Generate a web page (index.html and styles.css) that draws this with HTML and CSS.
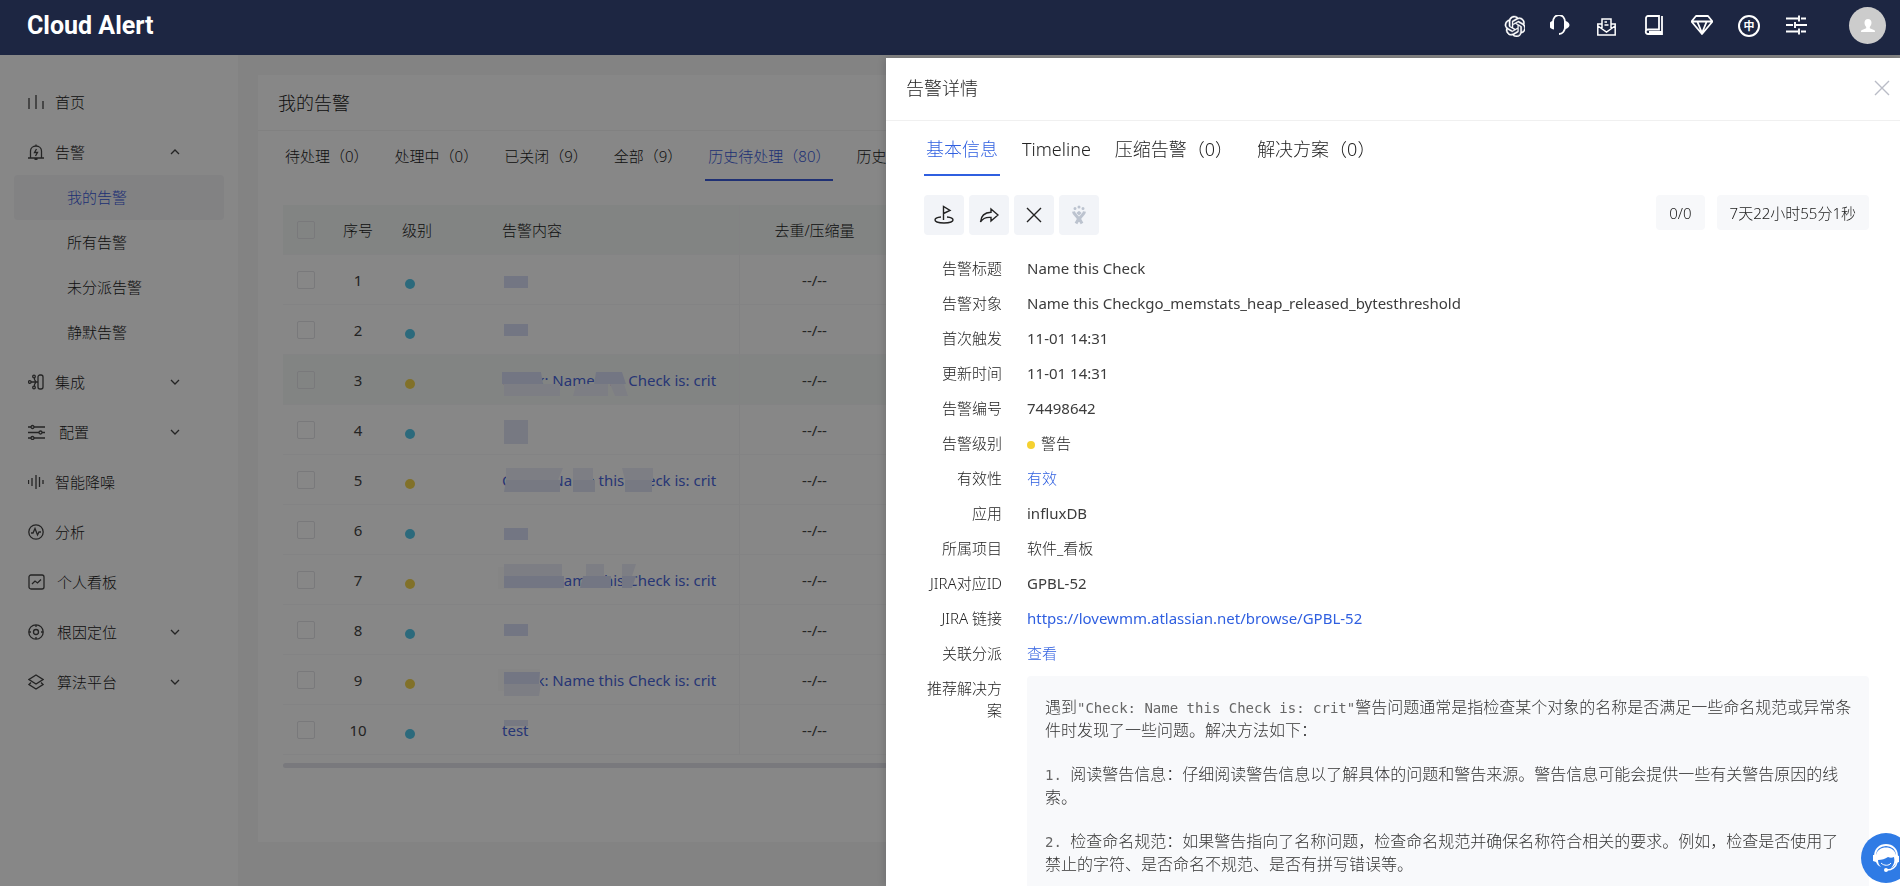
FILE: index.html
```html
<!DOCTYPE html>
<html lang="zh-CN">
<head>
    <meta charset="UTF-8">
    <meta name="viewport" content="width=device-width, initial-scale=1.0">
    <title>Cloud Alert</title>
    <link rel="stylesheet" href="styles.css">
</head>
<body>
    <header class="header">
        <div class="logo">Cloud Alert</div>
        <div class="header-tools">
            <button class="tool" aria-label="AI">
                <svg width="22" height="22" viewBox="-2 -1 25 25" fill="currentColor" stroke="currentColor" stroke-width=".4"><path d="M22.2819 9.8211a5.9847 5.9847 0 0 0-.5157-4.9108 6.0462 6.0462 0 0 0-6.5098-2.9A6.0651 6.0651 0 0 0 4.9807 4.1818a5.9847 5.9847 0 0 0-3.9977 2.9 6.0462 6.0462 0 0 0 .7427 7.0966 5.98 5.98 0 0 0 .511 4.9107 6.051 6.051 0 0 0 6.5146 2.9001A5.9847 5.9847 0 0 0 13.2599 24a6.0557 6.0557 0 0 0 5.7718-4.2058 5.9894 5.9894 0 0 0 3.9977-2.9001 6.0557 6.0557 0 0 0-.7475-7.0729zm-9.022 12.6081a4.4755 4.4755 0 0 1-2.8764-1.0408l.1419-.0804 4.7783-2.7582a.7948.7948 0 0 0 .3927-.6813v-6.7369l2.02 1.1686a.071.071 0 0 1 .038.052v5.5826a4.504 4.504 0 0 1-4.4945 4.4944zm-9.6607-4.1254a4.4708 4.4708 0 0 1-.5346-3.0137l.142.0852 4.783 2.7582a.7712.7712 0 0 0 .7806 0l5.8428-3.3685v2.3324a.0804.0804 0 0 1-.0332.0615L9.74 19.9502a4.4992 4.4992 0 0 1-6.1408-1.6464zM2.3408 7.8956a4.485 4.485 0 0 1 2.3655-1.9728V11.6a.7664.7664 0 0 0 .3879.6765l5.8144 3.3543-2.0201 1.1685a.0757.0757 0 0 1-.071 0l-4.8303-2.7865A4.504 4.504 0 0 1 2.3408 7.872zm16.5963 3.8558L13.1038 8.364 15.1192 7.2a.0757.0757 0 0 1 .071 0l4.8303 2.7913a4.4944 4.4944 0 0 1-.6765 8.1042v-5.6772a.79.79 0 0 0-.407-.667zm2.0107-3.0231l-.142-.0852-4.7735-2.7818a.7759.7759 0 0 0-.7854 0L9.409 9.2297V6.8974a.0662.0662 0 0 1 .0284-.0615l4.8303-2.7866a4.4992 4.4992 0 0 1 6.6802 4.66zM8.3065 12.863l-2.02-1.1638a.0804.0804 0 0 1-.038-.0567V6.0742a4.4992 4.4992 0 0 1 7.3757-3.4537l-.142.0805L8.704 5.459a.7948.7948 0 0 0-.3927.6813zm1.0976-2.3654l2.602-1.4998 2.6069 1.4998v2.9994l-2.5974 1.4997-2.6067-1.4997Z"/></svg>
            </button>
            <button class="tool" aria-label="客服">
                <svg width="22" height="22" viewBox="1 1 22 22"><path d="M4 8C4 4 6.500 1 10 1s6 3 6 7v5c0 4-2.500 7-6 7" fill="none" stroke="currentColor" stroke-width="1.800"/><path d="M5 6.500v9C2 15 0 13 0 11s2-4 5-4.500zM15 6.500v9c3-.5 5.500-2.500 5.500-4.500s-2.500-4-5.500-4.500z" fill="currentColor"/></svg>
            </button>
            <button class="tool" aria-label="消息">
                <svg width="22" height="22" viewBox="1 0 22 22" fill="none" stroke="currentColor" stroke-width="1.500"><path d="M5.500 9H1.800v11h17.400V9h-3.700M2 11l8.500 6 8.500-6M6 13V4h9v9M8.500 7h2.500M8.500 10h4"/></svg>
            </button>
            <button class="tool" aria-label="文档">
                <svg width="22" height="22" viewBox="0 1 22 22" fill="none" stroke="currentColor" stroke-width="1.800"><path d="M18 2v18H4c-3 0-3-4.500 0-4.500h11V2H4C3 2 2 3 2 4v13M5 18h13"/></svg>
            </button>
            <button class="tool" aria-label="会员">
                <svg width="22" height="22" viewBox="0 0 22 22" fill="none" stroke="currentColor" stroke-width="1.800" stroke-linejoin="round"><path d="M5 1h12l4.500 5.500L11 19 .5 6.500zM.5 6.500h21M6.500 7L11 18l4.500-11"/></svg>
            </button>
            <button class="tool lang" aria-label="语言">中</button>
            <button class="tool" aria-label="设置">
                <svg width="22" height="22" viewBox="0 1 22 22" fill="none" stroke="currentColor" stroke-width="1.900"><path d="M1 4.500h12M16 4.500h5M14 1.500v6M1 11h7M11 11h11M10 8v6M1 17.500h12M16 17.500h5M14 14.500v6"/></svg>
            </button>
            <button class="avatar" aria-label="用户">
                <svg width="14" height="14" viewBox="0 0 14 14" fill="#fff"><path d="M7 0c2.200 0 3.500 1.500 3.500 3.800C10.500 5.500 9.800 7 8.800 8v1.300L13 11c.8.4 1 1 1 2H0c0-1 .2-1.600 1-2l4.200-1.700V8c-1-1-1.700-2.500-1.700-4.200C3.500 1.500 4.800 0 7 0z"/></svg>
            </button>
        </div>
    </header>

    <div class="layout">
        <nav class="sidebar">
            <a class="menu-item" href="#">
                <svg width="16" height="16" viewBox="0 0 16 16"><path d="M1 4v11M8 1v14M15 7v8"/></svg>
                <span>首页</span>
            </a>
            <a class="menu-item" href="#">
                <svg width="16" height="16" viewBox="0 0 16 16"><path d="M0 14h16M2.500 14V7c0-3 2.500-5 5.500-5s5.500 2 5.500 5v7M8 .5V2M6.500 15.500h3M8.500 5L6.500 8.500h3L7.500 12"/></svg>
                <span>告警</span>
                <svg class="caret" width="10" height="6" viewBox="0 0 10 6"><path d="M1 5l4-4 4 4"/></svg>
            </a>
            <div class="submenu">
                <a class="active" href="#">我的告警</a>
                <a href="#">所有告警</a>
                <a href="#">未分派告警</a>
                <a href="#">静默告警</a>
            </div>
            <a class="menu-item" href="#">
                <svg width="16" height="16" viewBox="0 0 16 16"><rect x="10" y="1" width="5" height="14" rx="2"/><circle cx="1.800" cy="8" r="1.300"/><circle cx="6" cy="2.500" r="1.300"/><circle cx="6" cy="13.500" r="1.300"/><path d="M3 8h7M6.500 4v1.500L8 8M6.500 12v-1.500L8 8"/></svg>
                <span>集成</span>
                <svg class="caret" width="10" height="6" viewBox="0 0 10 6"><path d="M1 1l4 4 4-4"/></svg>
            </a>
            <a class="menu-item wide" href="#">
                <svg width="18" height="16" viewBox="0 0 18 16"><path d="M0 3h3M6 3h11M0 8.500h11M14 8.500h3M0 14h3M6 14h11"/><circle cx="4.500" cy="3" r="1.500"/><circle cx="12.500" cy="8.500" r="1.500"/><circle cx="4.500" cy="14" r="1.500"/></svg>
                <span>配置</span>
                <svg class="caret" width="10" height="6" viewBox="0 0 10 6"><path d="M1 1l4 4 4-4"/></svg>
            </a>
            <a class="menu-item" href="#">
                <svg width="16" height="16" viewBox="0 0 16 16"><path d="M.5 6v4M4 4v8M8 1v14M11.500 3v10M15 6v4"/></svg>
                <span>智能降噪</span>
            </a>
            <a class="menu-item" href="#">
                <svg width="16" height="16" viewBox="0 0 16 16"><circle cx="8" cy="8" r="7.200"/><path d="M3 9h2l2-4.500 2.500 6.500L11 8h2"/></svg>
                <span>分析</span>
            </a>
            <a class="menu-item" href="#">
                <svg width="18" height="16" viewBox="0 0 18 16"><rect x="1" y="1" width="15" height="14" rx="2"/><path d="M4 10l3-3 2.500 2L13 5.500"/></svg>
                <span>个人看板</span>
            </a>
            <a class="menu-item wide" href="#">
                <svg width="16" height="16" viewBox="0 0 16 16"><circle cx="8" cy="8" r="7.200"/><circle cx="8" cy="8" r="2.500"/><path d="M8 1v2M8 13v2M1 8h2M13 8h2"/></svg>
                <span>根因定位</span>
                <svg class="caret" width="10" height="6" viewBox="0 0 10 6"><path d="M1 1l4 4 4-4"/></svg>
            </a>
            <a class="menu-item wide" href="#">
                <svg width="16" height="16" viewBox="0 0 16 16"><path d="M8 1l7 4.500L8 10 1 5.500zM3 8.500l-2 2L8 15l7-4.500-2-2"/></svg>
                <span>算法平台</span>
                <svg class="caret" width="10" height="6" viewBox="0 0 10 6"><path d="M1 1l4 4 4-4"/></svg>
            </a>
        </nav>

        <main class="content">
            <section class="card">
                <h1 class="card-title">我的告警</h1>
                <div class="tabs">
                    <button>待处理（0）</button>
                    <button>处理中（0）</button>
                    <button>已关闭（9）</button>
                    <button>全部（9）</button>
                    <button class="active">历史待处理（80）</button>
                    <button>历史处理中</button>
                </div>
                <table class="alert-table">
                    <colgroup>
                        <col class="col-check">
                        <col class="col-no">
                        <col class="col-level">
                        <col class="col-text">
                        <col class="col-count">
                        <col>
                    </colgroup>
                    <thead>
                        <tr>
                            <th class="center"><input type="checkbox" aria-label="全选"></th>
                            <th class="center">序号</th>
                            <th>级别</th>
                            <th>告警内容</th>
                            <th class="center split">去重/压缩量</th>
                            <th></th>
                        </tr>
                    </thead>
                    <tbody>
                        <tr>
                            <td class="center"><input type="checkbox" aria-label="选择 1"></td>
                            <td class="center">1</td>
                            <td><i class="dot info"></i></td>
                            <td><svg class="mosaic" width="250" height="49"><rect class="m1" x="16" y="21" width="24" height="12"/></svg></td>
                            <td class="center split">--/--</td>
                            <td></td>
                        </tr>
                        <tr>
                            <td class="center"><input type="checkbox" aria-label="选择 2"></td>
                            <td class="center">2</td>
                            <td><i class="dot info"></i></td>
                            <td><svg class="mosaic" width="250" height="49"><rect class="m1" x="16" y="19" width="24" height="12"/></svg></td>
                            <td class="center split">--/--</td>
                            <td></td>
                        </tr>
                        <tr class="hover">
                            <td class="center"><input type="checkbox" aria-label="选择 3"></td>
                            <td class="center">3</td>
                            <td><i class="dot warn"></i></td>
                            <td><a href="#">Check: Name this Check is: crit</a><svg class="mosaic" width="250" height="49"><path class="m1" d="M14 17h39l2 12H14zM108 17h26l4 12h-32z"/><path class="m2" d="M16 29h56v12H16zM88 29h32v12H85zM122 29h14l4 12h-13z"/></svg></td>
                            <td class="center split">--/--</td>
                            <td></td>
                        </tr>
                        <tr>
                            <td class="center"><input type="checkbox" aria-label="选择 4"></td>
                            <td class="center">4</td>
                            <td><i class="dot info"></i></td>
                            <td><svg class="mosaic" width="250" height="49"><rect class="m3" x="16" y="15" width="24" height="24"/></svg></td>
                            <td class="center split">--/--</td>
                            <td></td>
                        </tr>
                        <tr>
                            <td class="center"><input type="checkbox" aria-label="选择 5"></td>
                            <td class="center">5</td>
                            <td><i class="dot warn"></i></td>
                            <td><a href="#">Check: Name this Check is: crit</a><svg class="mosaic" width="250" height="49"><path class="m2" d="M18 13h57l-5 12H18zM85 13h20v12H85zM134 13h31v12h-28z"/><path class="m3" d="M18 25h54v12H16zM85 25h22v12H85zM137 25h27v12h-27z"/></svg></td>
                            <td class="center split">--/--</td>
                            <td></td>
                        </tr>
                        <tr>
                            <td class="center"><input type="checkbox" aria-label="选择 6"></td>
                            <td class="center">6</td>
                            <td><i class="dot info"></i></td>
                            <td><svg class="mosaic" width="250" height="49"><rect class="m1" x="16" y="23" width="24" height="12"/></svg></td>
                            <td class="center split">--/--</td>
                            <td></td>
                        </tr>
                        <tr>
                            <td class="center"><input type="checkbox" aria-label="选择 7"></td>
                            <td class="center">7</td>
                            <td><i class="dot warn"></i></td>
                            <td><a href="#">Check: Name this Check is: crit</a><svg class="mosaic" width="250" height="49"><path class="m0" d="M10 12h64v22H10z"/><path class="m2" d="M16 9h58v12H16zM98 9h18v12H98zM134 9h14l-4 12h-10z"/><path class="m1" d="M16 21h60v12H16zM95 21h28v12H92zM134 21h14l-4 12h-10z"/></svg></td>
                            <td class="center split">--/--</td>
                            <td></td>
                        </tr>
                        <tr>
                            <td class="center"><input type="checkbox" aria-label="选择 8"></td>
                            <td class="center">8</td>
                            <td><i class="dot info"></i></td>
                            <td><svg class="mosaic" width="250" height="49"><rect class="m1" x="16" y="19" width="24" height="12"/></svg></td>
                            <td class="center split">--/--</td>
                            <td></td>
                        </tr>
                        <tr>
                            <td class="center"><input type="checkbox" aria-label="选择 9"></td>
                            <td class="center">9</td>
                            <td><i class="dot warn"></i></td>
                            <td><a href="#">Check: Name this Check is: crit</a><svg class="mosaic" width="250" height="49"><path class="m0" d="M10 14h42v22H10z"/><path class="m1" d="M16 17h36l-1 12H16z"/><path class="m2" d="M16 29h37l-2 12H16z"/></svg></td>
                            <td class="center split">--/--</td>
                            <td></td>
                        </tr>
                        <tr>
                            <td class="center"><input type="checkbox" aria-label="选择 10"></td>
                            <td class="center">10</td>
                            <td><i class="dot info"></i></td>
                            <td><a href="#">test</a><svg class="mosaic" width="250" height="49"><path class="m3" d="M16 15h24v6H16z"/></svg></td>
                            <td class="center split">--/--</td>
                            <td></td>
                        </tr>
                    </tbody>
                </table>
                <div class="scrollbar"></div>
            </section>
        </main>
    </div>

    <div class="mask"></div>

    <aside class="drawer">
        <div class="drawer-header">
            <h2>告警详情</h2>
            <button class="close" aria-label="关闭">
                <svg width="16" height="16" viewBox="0 0 16 16"><path d="M1 1l14 14M15 1L1 15" fill="none" stroke="#b9bcc6" stroke-width="1.400"/></svg>
            </button>
        </div>
        <div class="drawer-body">
            <div class="drawer-tabs">
                <button class="active">基本信息</button>
                <button>Timeline</button>
                <button>压缩告警（0）</button>
                <button>解决方案（0）</button>
            </div>
            <div class="toolbar">
                <button aria-label="认领">
                    <svg width="20" height="20" viewBox="0 0 20 20"><path d="M9.500 15V1.500L16 5.500l-6.500 3M7 12c-3.500.3-6 1.300-6 3s4 3 9 3 9-1.300 9-3-2.500-2.700-6-3"/></svg>
                </button>
                <button aria-label="转派">
                    <svg width="20" height="20" viewBox="0 0 20 20"><path d="M12 4l7 6-7 6v-3.500C7 12 4 13 1.500 17 2 11 6 7.500 12 7.300z"/></svg>
                </button>
                <button aria-label="关闭告警">
                    <svg width="20" height="20" viewBox="0 0 20 20"><path d="M3 3l14 14M17 3L3 17"/></svg>
                </button>
                <button class="disabled" aria-label="JIRA" disabled>
                    <svg width="20" height="20" viewBox="0 0 20 20"><path d="M4.500 6.500c.5 4 4 4 5 7.500L7 18.500M15.500 6.500c-.5 4-4 4-5 7.500l2.500 4.500M8.500 7L10 8.500 11.500 7" stroke-width="3"/><circle cx="6" cy="3.500" r=".8"/><circle cx="10" cy="2" r=".8"/><circle cx="14" cy="3.500" r=".8"/></svg>
                </button>
                <div class="tags">
                    <span>0/0</span>
                    <span>7天22小时55分1秒</span>
                </div>
            </div>
            <dl class="details">
                <dt>告警标题</dt><dd class="en">Name this Check</dd>
                <dt>告警对象</dt><dd class="en">Name this Checkgo_memstats_heap_released_bytesthreshold</dd>
                <dt>首次触发</dt><dd class="en">11-01 14:31</dd>
                <dt>更新时间</dt><dd class="en">11-01 14:31</dd>
                <dt>告警编号</dt><dd class="en">74498642</dd>
                <dt>告警级别</dt><dd><i class="level-dot"></i>警告</dd>
                <dt>有效性</dt><dd><a href="#">有效</a></dd>
                <dt>应用</dt><dd class="en">influxDB</dd>
                <dt>所属项目</dt><dd>软件_看板</dd>
                <dt>JIRA对应ID</dt><dd class="en">GPBL-52</dd>
                <dt>JIRA 链接</dt><dd class="en"><a href="#">https://lovewmm.atlassian.net/browse/GPBL-52</a></dd>
                <dt>关联分派</dt><dd><a href="#">查看</a></dd>
                <dt>推荐解决方案</dt>
                <dd class="solution">
                    <p>遇到<code>"Check: Name this Check is: crit"</code>警告问题通常是指检查某个对象的名称是否满足一些命名规范或异常条件时发现了一些问题。解决方法如下：</p>
                    <p><code>1. </code>阅读警告信息：仔细阅读警告信息以了解具体的问题和警告来源。警告信息可能会提供一些有关警告原因的线索。</p>
                    <p><code>2. </code>检查命名规范：如果警告指向了名称问题，检查命名规范并确保名称符合相关的要求。例如，检查是否使用了禁止的字符、是否命名不规范、是否有拼写错误等。</p>
                </dd>
            </dl>
        </div>
    </aside>

    <button class="service" aria-label="在线客服">
        <svg width="30" height="30" viewBox="0 0 30 30"><path d="M4 13C4 6 9 2 15 2s11 4 11 11" fill="none" stroke="#fff" stroke-width="2"/><path d="M5 12C6 7 10 4.500 15 4.500S24 7 25 12l3 1v6l-3 1c-1 2-3 4-5 5 3-3 4-7 3-11-2 1-4 1-6 0-3 2-6 3-10 3 0 3 1 5 3 7-3-1-4-3-5-5l-3-1v-6z" fill="#fff"/><path d="M10 20c3 3 8 3 10 0" fill="none" stroke="#fff"/><path d="M26 19c-1 5-5 8-10 8" fill="none" stroke="#fff" stroke-width="1.500"/><circle cx="15" cy="27" r="2" fill="#fff"/></svg>
    </button>
</body>
</html>
```

FILE: styles.css
```css
* {
    box-sizing: border-box;
}

body {
    margin: 0;
    height: 100vh;
    overflow: hidden;
    font-family: "Noto Sans", "Noto Sans CJK SC", sans-serif;
    font-size: 15px;
    font-weight: 300;
    line-height: 22px;
    color: #222;
    background-color: #f7f7f8;
}

h1, h2, p, dl, dd {
    margin: 0;
    font-weight: inherit;
}

a {
    color: inherit;
    text-decoration: none;
}

button {
    padding: 0;
    border: none;
    background: none;
    font: inherit;
    color: inherit;
    cursor: pointer;
}

svg {
    display: block;
}

/* header */
.header {
    display: flex;
    justify-content: space-between;
    align-items: center;
    height: 55px;
    padding: 0 14px 4px 27px;
    background-color: #1d2642;
    color: #fff;
}

.logo {
    font-family: Roboto, sans-serif;
    font-size: 25px;
    font-weight: bold;
}

.header-tools {
    display: flex;
    align-items: center;
    gap: 25px;
}

.tool {
    width: 22px;
    height: 22px;
}

.lang {
    border: 2px solid #fff;
    border-radius: 50%;
    font-size: 11px;
    font-weight: bold;
    line-height: 16px;
}

.avatar {
    display: flex;
    align-items: center;
    justify-content: center;
    width: 37px;
    height: 37px;
    margin-left: 17px;
    border-radius: 50%;
    background-color: #ccc;
}

/* layout */
.layout {
    display: flex;
    height: calc(100vh - 55px);
}

.sidebar {
    display: flex;
    flex-direction: column;
    gap: 5px;
    width: 238px;
    padding: 24px 14px;
    background-color: #fff;
}

.menu-item {
    display: flex;
    align-items: center;
    gap: 11px;
    height: 45px;
    padding: 0 44px 0 14px;
}

.menu-item.wide {
    gap: 13px;
}

.menu-item svg {
    fill: none;
    stroke: #444;
    stroke-width: 1.3;
}

.menu-item .caret {
    margin-left: auto;
}

.submenu {
    margin: -4px 0 -1px;
}

.submenu a {
    display: block;
    padding-left: 53px;
    border-radius: 4px;
    line-height: 45px;
}

.submenu .active {
    background-color: #f6f6f7;
    color: #3b5bdb;
}

.content {
    flex: 1;
    min-width: 0;
    padding: 20px 20px 44px;
}

.card {
    height: 100%;
    background-color: #fff;
}

.card-title {
    padding: 1px 20px 0;
    border-bottom: 1px solid #f3f3f4;
    font-size: 18px;
    line-height: 54px;
}

.tabs {
    display: flex;
    gap: 20px;
    height: 74px;
    padding: 0 24px;
    align-items: flex-start;
}

.tabs button {
    padding: 14px 3px 12px;
    border-bottom: 2px solid transparent;
    white-space: nowrap;
}

.tabs .active {
    border-color: #3b5bdb;
    color: #3b5bdb;
}

/* table */
.alert-table {
    width: calc(100% - 50px);
    margin: 0 25px;
    border-collapse: separate;
    border-spacing: 0;
    table-layout: fixed;
}

.col-check {
    width: 45px;
}

.col-no {
    width: 60px;
}

.col-level {
    width: 100px;
}

.col-text {
    width: 251px;
}

.col-count {
    width: 150px;
}

.alert-table th,
.alert-table td {
    position: relative;
    height: 50px;
    padding: 0 14px;
    border-bottom: 1px solid #f8f8f9;
    font-weight: inherit;
    text-align: left;
    white-space: nowrap;
}

.alert-table td {
    color: #444;
    font-weight: 400;
}

.alert-table th,
.alert-table .hover td {
    background-color: #f6faf8;
}

.alert-table .center {
    padding: 0;
    text-align: center;
}

.alert-table .split {
    border-left: 1px solid #f5f5f8;
}

.alert-table a {
    color: #4a67dd;
}

.alert-table input {
    display: block;
    appearance: none;
    width: 18px;
    height: 18px;
    margin: 0 auto;
    border: 1px solid #e4e4e9;
    border-radius: 2px;
    background-color: transparent;
}

.dot {
    display: block;
    width: 10px;
    height: 10px;
    margin: 8px 3px 0;
    border-radius: 50%;
}

.info {
    background-color: #54c8ea;
}

.warn {
    background-color: #f3d64e;
}

.mosaic {
    position: absolute;
    top: 0;
    left: 0;
}

.m0 {
    fill: #fcfcfc;
}

.m1 {
    fill: #dadff8;
}

.m2 {
    fill: #edeef9;
}

.m3 {
    fill: #e0e4f6;
}

.scrollbar {
    height: 5px;
    margin: 8px 25px 0;
    border-radius: 3px;
    background-color: #e4e5ec;
}

/* mask and drawer */
.mask {
    position: fixed;
    top: 55px;
    right: 0;
    bottom: 0;
    left: 0;
    background-color: rgba(0, 0, 0, 0.47);
}

.drawer {
    position: fixed;
    top: 58px;
    right: 0;
    bottom: 0;
    width: 1014px;
    max-width: 100%;
    overflow: hidden;
    background-color: #fff;
    box-shadow: -2px 0 8px rgba(0, 0, 0, 0.15);
}

.drawer-header {
    display: flex;
    align-items: center;
    justify-content: space-between;
    height: 63px;
    padding: 0 10px 2px 20px;
    border-bottom: 1px solid #f0f0f0;
}

.drawer-header h2 {
    font-size: 18px;
}

.drawer-body {
    padding: 0 31px 0 38px;
}

.drawer-tabs {
    display: flex;
    gap: 20px;
    font-size: 18px;
}

.drawer-tabs button {
    height: 55px;
    padding: 2px 2px 0;
    border-bottom: 2px solid transparent;
}

.drawer-tabs .active {
    border-color: #2f5fe0;
    color: #2f5fe0;
}

.toolbar {
    display: flex;
    gap: 5px;
    margin: 19px 0 16px;
}

.toolbar button {
    display: flex;
    align-items: center;
    justify-content: center;
    width: 40px;
    height: 40px;
    border-radius: 4px;
    background-color: #f2f4f8;
}

.toolbar svg {
    fill: none;
    stroke: #222;
    stroke-width: 1.4;
}

.toolbar .disabled svg {
    stroke: #bcc3cf;
}

.tags {
    display: flex;
    gap: 12px;
    margin-left: auto;
}

.tags span {
    height: 35px;
    padding: 0 13px;
    border-radius: 4px;
    background-color: #f7f8fa;
    line-height: 36px;
}

.details {
    display: grid;
    grid-template-columns: 78px 1fr;
    column-gap: 25px;
    row-gap: 1px;
}

.details dt {
    padding: 6px 0;
    text-align: right;
}

.details dd {
    padding: 6px 0;
}

.details .en {
    color: #3c3c3c;
    font-weight: 400;
}

.details a {
    color: #2f5fe0;
}

.level-dot {
    display: inline-block;
    width: 8px;
    height: 8px;
    margin-right: 6px;
    border-radius: 50%;
    background-color: #f5d130;
}

.details .solution {
    margin-top: 5px;
    padding: 20px 16px 20px 18px;
    border-radius: 4px;
    background-color: #f8f9fb;
    font-size: 16px;
    color: #333;
}

.solution p {
    margin-bottom: 22px;
}

.solution code {
    font-family: "DejaVu Sans Mono", monospace;
    font-size: 14px;
    color: #666;
    white-space: pre-wrap;
}

.service {
    position: fixed;
    right: -11px;
    bottom: 3px;
    display: flex;
    align-items: center;
    justify-content: center;
    width: 50px;
    height: 50px;
    border-radius: 50%;
    background-color: #2f7be5;
}
```
